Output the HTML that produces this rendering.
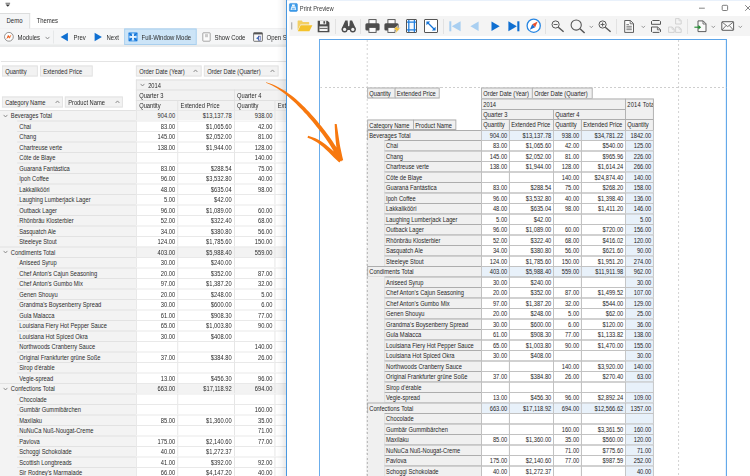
<!DOCTYPE html>
<html><head><meta charset="utf-8"><title>Print Preview</title>
<style>
html,body{margin:0;padding:0}
body{width:750px;height:476px;overflow:hidden;background:#fff;position:relative;font-family:"Liberation Sans",sans-serif;color:#2b2b2b}
.S{position:absolute;top:0;transform-origin:0 0;transform:scale(0.45,0.5);font-size:12.8px}
.S div{position:absolute;white-space:nowrap;overflow:hidden;box-sizing:border-box}
#icons svg{position:absolute;overflow:visible}
#left{position:absolute;left:0;top:0;width:286px;height:476px;overflow:hidden;background:#fff}
#shadow{position:absolute;left:277px;top:0;width:9px;height:476px;background:linear-gradient(to right,rgba(0,0,0,0),rgba(0,0,0,0.03) 50%,rgba(0,0,0,0.09))}
#wb{position:absolute;left:286px;top:0;width:1px;height:476px;background:#4a98e0}
#right{position:absolute;left:287px;top:0;width:463px;height:476px;overflow:hidden;background:#fff;border-top:1px solid #e9f1fb;box-sizing:border-box}
#right .S{left:-287px;top:-1px}
.r{font-size:13.3px;line-height:26px}
.r2{line-height:26px;color:#3a3a3a}
.rb{background:#f5f6f7;border-bottom:2px solid #dcdddd;border-top:1px solid #dcdddd}
.tab{background:#f5f6f7;border-top:2px solid #dcdddd;border-right:2px solid #dcdddd}
.fw{background:#cce4f7;border:2px solid #a9cfee}
.fh{background:#f2f2f2;border:2px solid #e2e2e2;padding-left:5px}
.lh{background:#f2f2f2;border-left:2px solid #e0e0e0;border-top:2px solid #e0e0e0;padding-left:5px}
.lt,.lp,.li{background:#f3f3f3;line-height:19.2px}
.lt,.lp{border-top:2px solid #e2e2e2}
.lp{padding-left:5px}
.ld{background:#fff;border-left:2px solid #e4e4e4;border-top:2px solid #e9e9e9;line-height:19.2px;text-align:right;padding-right:5px}
.lg{background:#f3f3f3}
.page{background:#fff;border:3px solid #64a9ea;border-top:2.8px solid #5ca4e8}
.rh,.rt,.rp,.rd{color:#1e1e1e;border:2px solid #adadad;line-height:19px}
.rh,.rt,.rp,.ri{background:#f0f0f0;padding-left:3px}
.ri{border:none}
.rp{padding-left:1.5px;border-left-color:#dcdcdc}
.rd{text-align:right;padding-right:4px;border-color:#c2c2c2}
.rb2{background:#e8f1fa}
.dv{background:repeating-linear-gradient(to bottom,#cecece 0,#cecece 4.2px,transparent 4.2px,transparent 8.4px)}
.dh{background:repeating-linear-gradient(to right,#cecece 0,#cecece 4.6px,transparent 4.6px,transparent 9.2px)}
.dv2{background:repeating-linear-gradient(to bottom,#a2a2a2 0,#a2a2a2 4.2px,transparent 4.2px,transparent 8.4px)}
</style></head><body>
<div id="left"><div class="S" style="left:0">
<div class="rb" style="left:0px;top:55.4px;width:644.44px;height:36.6px;"></div>
<div class="tab" style="left:0px;top:26px;width:66.67px;height:31px;"></div>
<div class="r" style="left:14.44px;top:29px;width:66.67px;height:26px;">Demo</div>
<div class="r" style="left:81.11px;top:29px;width:66.67px;height:26px;">Themes</div>
<div class="r" style="left:38.89px;top:62.2px;width:66.67px;height:26px;">Modules</div>
<div class="" style="left:117.78px;top:61px;width:1.11px;height:26px;background:#d5d6d7"></div>
<div class="r" style="left:163.33px;top:62.2px;width:66.67px;height:26px;">Prev</div>
<div class="r" style="left:236.67px;top:62.2px;width:66.67px;height:26px;">Next</div>
<div class="fw" style="left:275.56px;top:57px;width:161.11px;height:33px;"></div>
<div class="r" style="left:314.44px;top:62.2px;width:133.33px;height:26px;">Full-Window Mode</div>
<div class="r" style="left:476.67px;top:62.2px;width:88.89px;height:26px;">Show Code</div>
<div class="r" style="left:592.22px;top:62.2px;width:88.89px;height:26px;">Open S</div>
<div class="" style="left:2.22px;top:122px;width:644.44px;height:2px;background:#e4e4e4"></div>
<div class="fh" style="left:4.44px;top:130.6px;width:80px;height:22.8px;line-height:20.8px">Quantity</div>
<div class="fh" style="left:88.89px;top:130.6px;width:116.67px;height:22.8px;line-height:20.8px">Extended Price</div>
<div class="fh" style="left:302.22px;top:130.6px;width:145.56px;height:22.8px;line-height:20.8px">Order Date (Year)</div>
<div class="fh" style="left:453.33px;top:130.6px;width:166px;height:22.8px;line-height:20.8px">Order Date (Quarter)</div>
<div class="fh" style="left:4.44px;top:192.6px;width:135.56px;height:22.8px;line-height:20.8px">Category Name</div>
<div class="fh" style="left:144.44px;top:192.6px;width:128.89px;height:22.8px;line-height:20.8px">Product Name</div>
<div class="lh" style="left:302.22px;top:159px;width:334.44px;height:21px;line-height:20px;padding-left:25px">2014</div>
<div class="lh" style="left:302.22px;top:179px;width:218.67px;height:22px;line-height:21px;">Quarter 3</div>
<div class="lh" style="left:519.78px;top:179px;width:223.33px;height:22px;line-height:21px;">Quarter 4</div>
<div class="lh" style="left:302.22px;top:200px;width:93.11px;height:21px;line-height:20px;">Quantity</div>
<div class="lh" style="left:394.22px;top:200px;width:126.67px;height:21px;line-height:20px;">Extended Price</div>
<div class="lh" style="left:519.78px;top:200px;width:91.56px;height:21px;line-height:20px;">Quantity</div>
<div class="lh" style="left:610.22px;top:200px;width:124.22px;height:21px;line-height:20px;">Extended Price</div>
<div class="li" style="left:0px;top:220px;width:302.22px;height:740px;"></div>
<div class="lt" style="left:0px;top:220px;width:302.22px;height:21px;padding-left:24px">Beverages Total</div>
<div class="ld lg" style="left:302.22px;top:220px;width:92px;height:21px;">904.00</div>
<div class="ld lg" style="left:394.22px;top:220px;width:125.56px;height:21px;">$13,137.78</div>
<div class="ld lg" style="left:519.78px;top:220px;width:90.44px;height:21px;">938.00</div>
<div class="ld lg" style="left:610.22px;top:220px;width:123.11px;height:21px;"></div>
<div class="li" style="left:0px;top:241px;width:37.78px;height:21px;"></div>
<div class="lp" style="left:37.78px;top:241px;width:264.44px;height:21px;">Chai</div>
<div class="ld" style="left:302.22px;top:241px;width:92px;height:21px;">83.00</div>
<div class="ld" style="left:394.22px;top:241px;width:125.56px;height:21px;">$1,065.60</div>
<div class="ld" style="left:519.78px;top:241px;width:90.44px;height:21px;">42.00</div>
<div class="ld" style="left:610.22px;top:241px;width:123.11px;height:21px;"></div>
<div class="li" style="left:0px;top:262px;width:37.78px;height:21px;"></div>
<div class="lp" style="left:37.78px;top:262px;width:264.44px;height:21px;">Chang</div>
<div class="ld" style="left:302.22px;top:262px;width:92px;height:21px;">145.00</div>
<div class="ld" style="left:394.22px;top:262px;width:125.56px;height:21px;">$2,052.00</div>
<div class="ld" style="left:519.78px;top:262px;width:90.44px;height:21px;">81.00</div>
<div class="ld" style="left:610.22px;top:262px;width:123.11px;height:21px;"></div>
<div class="li" style="left:0px;top:283px;width:37.78px;height:21px;"></div>
<div class="lp" style="left:37.78px;top:283px;width:264.44px;height:21px;">Chartreuse verte</div>
<div class="ld" style="left:302.22px;top:283px;width:92px;height:21px;">138.00</div>
<div class="ld" style="left:394.22px;top:283px;width:125.56px;height:21px;">$1,944.00</div>
<div class="ld" style="left:519.78px;top:283px;width:90.44px;height:21px;">128.00</div>
<div class="ld" style="left:610.22px;top:283px;width:123.11px;height:21px;"></div>
<div class="li" style="left:0px;top:304px;width:37.78px;height:21px;"></div>
<div class="lp" style="left:37.78px;top:304px;width:264.44px;height:21px;">Côte de Blaye</div>
<div class="ld" style="left:302.22px;top:304px;width:92px;height:21px;"></div>
<div class="ld" style="left:394.22px;top:304px;width:125.56px;height:21px;"></div>
<div class="ld" style="left:519.78px;top:304px;width:90.44px;height:21px;">140.00</div>
<div class="ld" style="left:610.22px;top:304px;width:123.11px;height:21px;"></div>
<div class="li" style="left:0px;top:325px;width:37.78px;height:21px;"></div>
<div class="lp" style="left:37.78px;top:325px;width:264.44px;height:21px;">Guaraná Fantástica</div>
<div class="ld" style="left:302.22px;top:325px;width:92px;height:21px;">83.00</div>
<div class="ld" style="left:394.22px;top:325px;width:125.56px;height:21px;">$288.54</div>
<div class="ld" style="left:519.78px;top:325px;width:90.44px;height:21px;">75.00</div>
<div class="ld" style="left:610.22px;top:325px;width:123.11px;height:21px;"></div>
<div class="li" style="left:0px;top:346px;width:37.78px;height:21px;"></div>
<div class="lp" style="left:37.78px;top:346px;width:264.44px;height:21px;">Ipoh Coffee</div>
<div class="ld" style="left:302.22px;top:346px;width:92px;height:21px;">96.00</div>
<div class="ld" style="left:394.22px;top:346px;width:125.56px;height:21px;">$3,532.80</div>
<div class="ld" style="left:519.78px;top:346px;width:90.44px;height:21px;">40.00</div>
<div class="ld" style="left:610.22px;top:346px;width:123.11px;height:21px;"></div>
<div class="li" style="left:0px;top:367px;width:37.78px;height:21px;"></div>
<div class="lp" style="left:37.78px;top:367px;width:264.44px;height:21px;">Lakkalikööri</div>
<div class="ld" style="left:302.22px;top:367px;width:92px;height:21px;">48.00</div>
<div class="ld" style="left:394.22px;top:367px;width:125.56px;height:21px;">$635.04</div>
<div class="ld" style="left:519.78px;top:367px;width:90.44px;height:21px;">98.00</div>
<div class="ld" style="left:610.22px;top:367px;width:123.11px;height:21px;"></div>
<div class="li" style="left:0px;top:388px;width:37.78px;height:21px;"></div>
<div class="lp" style="left:37.78px;top:388px;width:264.44px;height:21px;">Laughing Lumberjack Lager</div>
<div class="ld" style="left:302.22px;top:388px;width:92px;height:21px;">5.00</div>
<div class="ld" style="left:394.22px;top:388px;width:125.56px;height:21px;">$42.00</div>
<div class="ld" style="left:519.78px;top:388px;width:90.44px;height:21px;"></div>
<div class="ld" style="left:610.22px;top:388px;width:123.11px;height:21px;"></div>
<div class="li" style="left:0px;top:409px;width:37.78px;height:21px;"></div>
<div class="lp" style="left:37.78px;top:409px;width:264.44px;height:21px;">Outback Lager</div>
<div class="ld" style="left:302.22px;top:409px;width:92px;height:21px;">96.00</div>
<div class="ld" style="left:394.22px;top:409px;width:125.56px;height:21px;">$1,089.00</div>
<div class="ld" style="left:519.78px;top:409px;width:90.44px;height:21px;">60.00</div>
<div class="ld" style="left:610.22px;top:409px;width:123.11px;height:21px;"></div>
<div class="li" style="left:0px;top:430px;width:37.78px;height:21px;"></div>
<div class="lp" style="left:37.78px;top:430px;width:264.44px;height:21px;">Rhönbräu Klosterbier</div>
<div class="ld" style="left:302.22px;top:430px;width:92px;height:21px;">52.00</div>
<div class="ld" style="left:394.22px;top:430px;width:125.56px;height:21px;">$322.40</div>
<div class="ld" style="left:519.78px;top:430px;width:90.44px;height:21px;">68.00</div>
<div class="ld" style="left:610.22px;top:430px;width:123.11px;height:21px;"></div>
<div class="li" style="left:0px;top:451px;width:37.78px;height:21px;"></div>
<div class="lp" style="left:37.78px;top:451px;width:264.44px;height:21px;">Sasquatch Ale</div>
<div class="ld" style="left:302.22px;top:451px;width:92px;height:21px;">34.00</div>
<div class="ld" style="left:394.22px;top:451px;width:125.56px;height:21px;">$380.80</div>
<div class="ld" style="left:519.78px;top:451px;width:90.44px;height:21px;">56.00</div>
<div class="ld" style="left:610.22px;top:451px;width:123.11px;height:21px;"></div>
<div class="li" style="left:0px;top:472px;width:37.78px;height:21px;"></div>
<div class="lp" style="left:37.78px;top:472px;width:264.44px;height:21px;">Steeleye Stout</div>
<div class="ld" style="left:302.22px;top:472px;width:92px;height:21px;">124.00</div>
<div class="ld" style="left:394.22px;top:472px;width:125.56px;height:21px;">$1,785.60</div>
<div class="ld" style="left:519.78px;top:472px;width:90.44px;height:21px;">150.00</div>
<div class="ld" style="left:610.22px;top:472px;width:123.11px;height:21px;"></div>
<div class="lt" style="left:0px;top:493px;width:302.22px;height:21px;padding-left:24px">Condiments Total</div>
<div class="ld lg" style="left:302.22px;top:493px;width:92px;height:21px;">403.00</div>
<div class="ld lg" style="left:394.22px;top:493px;width:125.56px;height:21px;">$5,988.40</div>
<div class="ld lg" style="left:519.78px;top:493px;width:90.44px;height:21px;">559.00</div>
<div class="ld lg" style="left:610.22px;top:493px;width:123.11px;height:21px;"></div>
<div class="li" style="left:0px;top:514px;width:37.78px;height:21px;"></div>
<div class="lp" style="left:37.78px;top:514px;width:264.44px;height:21px;">Aniseed Syrup</div>
<div class="ld" style="left:302.22px;top:514px;width:92px;height:21px;">30.00</div>
<div class="ld" style="left:394.22px;top:514px;width:125.56px;height:21px;">$240.00</div>
<div class="ld" style="left:519.78px;top:514px;width:90.44px;height:21px;"></div>
<div class="ld" style="left:610.22px;top:514px;width:123.11px;height:21px;"></div>
<div class="li" style="left:0px;top:535px;width:37.78px;height:21px;"></div>
<div class="lp" style="left:37.78px;top:535px;width:264.44px;height:21px;">Chef Anton's Cajun Seasoning</div>
<div class="ld" style="left:302.22px;top:535px;width:92px;height:21px;">20.00</div>
<div class="ld" style="left:394.22px;top:535px;width:125.56px;height:21px;">$352.00</div>
<div class="ld" style="left:519.78px;top:535px;width:90.44px;height:21px;">87.00</div>
<div class="ld" style="left:610.22px;top:535px;width:123.11px;height:21px;"></div>
<div class="li" style="left:0px;top:556px;width:37.78px;height:21px;"></div>
<div class="lp" style="left:37.78px;top:556px;width:264.44px;height:21px;">Chef Anton's Gumbo Mix</div>
<div class="ld" style="left:302.22px;top:556px;width:92px;height:21px;">97.00</div>
<div class="ld" style="left:394.22px;top:556px;width:125.56px;height:21px;">$1,387.20</div>
<div class="ld" style="left:519.78px;top:556px;width:90.44px;height:21px;">32.00</div>
<div class="ld" style="left:610.22px;top:556px;width:123.11px;height:21px;"></div>
<div class="li" style="left:0px;top:577px;width:37.78px;height:21px;"></div>
<div class="lp" style="left:37.78px;top:577px;width:264.44px;height:21px;">Genen Shouyu</div>
<div class="ld" style="left:302.22px;top:577px;width:92px;height:21px;">20.00</div>
<div class="ld" style="left:394.22px;top:577px;width:125.56px;height:21px;">$248.00</div>
<div class="ld" style="left:519.78px;top:577px;width:90.44px;height:21px;">5.00</div>
<div class="ld" style="left:610.22px;top:577px;width:123.11px;height:21px;"></div>
<div class="li" style="left:0px;top:598px;width:37.78px;height:21px;"></div>
<div class="lp" style="left:37.78px;top:598px;width:264.44px;height:21px;">Grandma's Boysenberry Spread</div>
<div class="ld" style="left:302.22px;top:598px;width:92px;height:21px;">30.00</div>
<div class="ld" style="left:394.22px;top:598px;width:125.56px;height:21px;">$600.00</div>
<div class="ld" style="left:519.78px;top:598px;width:90.44px;height:21px;">6.00</div>
<div class="ld" style="left:610.22px;top:598px;width:123.11px;height:21px;"></div>
<div class="li" style="left:0px;top:619px;width:37.78px;height:21px;"></div>
<div class="lp" style="left:37.78px;top:619px;width:264.44px;height:21px;">Gula Malacca</div>
<div class="ld" style="left:302.22px;top:619px;width:92px;height:21px;">61.00</div>
<div class="ld" style="left:394.22px;top:619px;width:125.56px;height:21px;">$908.30</div>
<div class="ld" style="left:519.78px;top:619px;width:90.44px;height:21px;">77.00</div>
<div class="ld" style="left:610.22px;top:619px;width:123.11px;height:21px;"></div>
<div class="li" style="left:0px;top:640px;width:37.78px;height:21px;"></div>
<div class="lp" style="left:37.78px;top:640px;width:264.44px;height:21px;">Louisiana Fiery Hot Pepper Sauce</div>
<div class="ld" style="left:302.22px;top:640px;width:92px;height:21px;">65.00</div>
<div class="ld" style="left:394.22px;top:640px;width:125.56px;height:21px;">$1,003.80</div>
<div class="ld" style="left:519.78px;top:640px;width:90.44px;height:21px;">90.00</div>
<div class="ld" style="left:610.22px;top:640px;width:123.11px;height:21px;"></div>
<div class="li" style="left:0px;top:661px;width:37.78px;height:21px;"></div>
<div class="lp" style="left:37.78px;top:661px;width:264.44px;height:21px;">Louisiana Hot Spiced Okra</div>
<div class="ld" style="left:302.22px;top:661px;width:92px;height:21px;">30.00</div>
<div class="ld" style="left:394.22px;top:661px;width:125.56px;height:21px;">$408.00</div>
<div class="ld" style="left:519.78px;top:661px;width:90.44px;height:21px;"></div>
<div class="ld" style="left:610.22px;top:661px;width:123.11px;height:21px;"></div>
<div class="li" style="left:0px;top:682px;width:37.78px;height:21px;"></div>
<div class="lp" style="left:37.78px;top:682px;width:264.44px;height:21px;">Northwoods Cranberry Sauce</div>
<div class="ld" style="left:302.22px;top:682px;width:92px;height:21px;"></div>
<div class="ld" style="left:394.22px;top:682px;width:125.56px;height:21px;"></div>
<div class="ld" style="left:519.78px;top:682px;width:90.44px;height:21px;">140.00</div>
<div class="ld" style="left:610.22px;top:682px;width:123.11px;height:21px;"></div>
<div class="li" style="left:0px;top:703px;width:37.78px;height:21px;"></div>
<div class="lp" style="left:37.78px;top:703px;width:264.44px;height:21px;">Original Frankfurter grüne Soße</div>
<div class="ld" style="left:302.22px;top:703px;width:92px;height:21px;">37.00</div>
<div class="ld" style="left:394.22px;top:703px;width:125.56px;height:21px;">$384.80</div>
<div class="ld" style="left:519.78px;top:703px;width:90.44px;height:21px;">26.00</div>
<div class="ld" style="left:610.22px;top:703px;width:123.11px;height:21px;"></div>
<div class="li" style="left:0px;top:724px;width:37.78px;height:21px;"></div>
<div class="lp" style="left:37.78px;top:724px;width:264.44px;height:21px;">Sirop d'érable</div>
<div class="ld" style="left:302.22px;top:724px;width:92px;height:21px;"></div>
<div class="ld" style="left:394.22px;top:724px;width:125.56px;height:21px;"></div>
<div class="ld" style="left:519.78px;top:724px;width:90.44px;height:21px;"></div>
<div class="ld" style="left:610.22px;top:724px;width:123.11px;height:21px;"></div>
<div class="li" style="left:0px;top:745px;width:37.78px;height:21px;"></div>
<div class="lp" style="left:37.78px;top:745px;width:264.44px;height:21px;">Vegie-spread</div>
<div class="ld" style="left:302.22px;top:745px;width:92px;height:21px;">13.00</div>
<div class="ld" style="left:394.22px;top:745px;width:125.56px;height:21px;">$456.30</div>
<div class="ld" style="left:519.78px;top:745px;width:90.44px;height:21px;">96.00</div>
<div class="ld" style="left:610.22px;top:745px;width:123.11px;height:21px;"></div>
<div class="lt" style="left:0px;top:766px;width:302.22px;height:21px;padding-left:24px">Confections Total</div>
<div class="ld lg" style="left:302.22px;top:766px;width:92px;height:21px;">663.00</div>
<div class="ld lg" style="left:394.22px;top:766px;width:125.56px;height:21px;">$17,118.92</div>
<div class="ld lg" style="left:519.78px;top:766px;width:90.44px;height:21px;">694.00</div>
<div class="ld lg" style="left:610.22px;top:766px;width:123.11px;height:21px;"></div>
<div class="li" style="left:0px;top:787px;width:37.78px;height:21px;"></div>
<div class="lp" style="left:37.78px;top:787px;width:264.44px;height:21px;">Chocolade</div>
<div class="ld" style="left:302.22px;top:787px;width:92px;height:21px;"></div>
<div class="ld" style="left:394.22px;top:787px;width:125.56px;height:21px;"></div>
<div class="ld" style="left:519.78px;top:787px;width:90.44px;height:21px;"></div>
<div class="ld" style="left:610.22px;top:787px;width:123.11px;height:21px;"></div>
<div class="li" style="left:0px;top:808px;width:37.78px;height:21px;"></div>
<div class="lp" style="left:37.78px;top:808px;width:264.44px;height:21px;">Gumbär Gummibärchen</div>
<div class="ld" style="left:302.22px;top:808px;width:92px;height:21px;"></div>
<div class="ld" style="left:394.22px;top:808px;width:125.56px;height:21px;"></div>
<div class="ld" style="left:519.78px;top:808px;width:90.44px;height:21px;">160.00</div>
<div class="ld" style="left:610.22px;top:808px;width:123.11px;height:21px;"></div>
<div class="li" style="left:0px;top:829px;width:37.78px;height:21px;"></div>
<div class="lp" style="left:37.78px;top:829px;width:264.44px;height:21px;">Maxilaku</div>
<div class="ld" style="left:302.22px;top:829px;width:92px;height:21px;">85.00</div>
<div class="ld" style="left:394.22px;top:829px;width:125.56px;height:21px;">$1,360.00</div>
<div class="ld" style="left:519.78px;top:829px;width:90.44px;height:21px;">35.00</div>
<div class="ld" style="left:610.22px;top:829px;width:123.11px;height:21px;"></div>
<div class="li" style="left:0px;top:850px;width:37.78px;height:21px;"></div>
<div class="lp" style="left:37.78px;top:850px;width:264.44px;height:21px;">NuNuCa Nuß-Nougat-Creme</div>
<div class="ld" style="left:302.22px;top:850px;width:92px;height:21px;"></div>
<div class="ld" style="left:394.22px;top:850px;width:125.56px;height:21px;"></div>
<div class="ld" style="left:519.78px;top:850px;width:90.44px;height:21px;">71.00</div>
<div class="ld" style="left:610.22px;top:850px;width:123.11px;height:21px;"></div>
<div class="li" style="left:0px;top:871px;width:37.78px;height:21px;"></div>
<div class="lp" style="left:37.78px;top:871px;width:264.44px;height:21px;">Pavlova</div>
<div class="ld" style="left:302.22px;top:871px;width:92px;height:21px;">175.00</div>
<div class="ld" style="left:394.22px;top:871px;width:125.56px;height:21px;">$2,140.60</div>
<div class="ld" style="left:519.78px;top:871px;width:90.44px;height:21px;">77.00</div>
<div class="ld" style="left:610.22px;top:871px;width:123.11px;height:21px;"></div>
<div class="li" style="left:0px;top:892px;width:37.78px;height:21px;"></div>
<div class="lp" style="left:37.78px;top:892px;width:264.44px;height:21px;">Schoggi Schokolade</div>
<div class="ld" style="left:302.22px;top:892px;width:92px;height:21px;">40.00</div>
<div class="ld" style="left:394.22px;top:892px;width:125.56px;height:21px;">$1,272.37</div>
<div class="ld" style="left:519.78px;top:892px;width:90.44px;height:21px;"></div>
<div class="ld" style="left:610.22px;top:892px;width:123.11px;height:21px;"></div>
<div class="li" style="left:0px;top:913px;width:37.78px;height:21px;"></div>
<div class="lp" style="left:37.78px;top:913px;width:264.44px;height:21px;">Scottish Longbreads</div>
<div class="ld" style="left:302.22px;top:913px;width:92px;height:21px;">41.00</div>
<div class="ld" style="left:394.22px;top:913px;width:125.56px;height:21px;">$392.00</div>
<div class="ld" style="left:519.78px;top:913px;width:90.44px;height:21px;">92.00</div>
<div class="ld" style="left:610.22px;top:913px;width:123.11px;height:21px;"></div>
<div class="li" style="left:0px;top:934px;width:37.78px;height:21px;"></div>
<div class="lp" style="left:37.78px;top:934px;width:264.44px;height:21px;">Sir Rodney's Marmalade</div>
<div class="ld" style="left:302.22px;top:934px;width:92px;height:21px;">66.00</div>
<div class="ld" style="left:394.22px;top:934px;width:125.56px;height:21px;">$4,147.20</div>
<div class="ld" style="left:519.78px;top:934px;width:90.44px;height:21px;">40.00</div>
<div class="ld" style="left:610.22px;top:934px;width:123.11px;height:21px;"></div>
</div></div>
<div id="shadow"></div>
<div id="wb"></div>
<div id="right"><div class="S">
<div class="r2" style="left:666.22px;top:4.2px;width:133.33px;height:26px;">Print Preview</div>
<div class="" style="left:642.89px;top:32.4px;width:1044.44px;height:39.2px;background:#f4f4f4"></div>
<div class="page" style="left:708.22px;top:78px;width:907.78px;height:900px;"></div>
<div class="dv" style="left:814.67px;top:80px;width:2px;height:880px;"></div>
<div class="dv" style="left:1507.33px;top:80px;width:2px;height:880px;"></div>
<div class="dh" style="left:712.22px;top:173.6px;width:902.22px;height:2px;"></div>
<div class="rh" style="left:815.56px;top:174.6px;width:63.33px;height:22.4px;line-height:20.4px;">Quantity</div>
<div class="rh" style="left:876.67px;top:174.6px;width:100px;height:22.4px;line-height:20.4px;">Extended Price</div>
<div class="rh" style="left:815.56px;top:239.2px;width:104.44px;height:21px;line-height:19px;">Category Name</div>
<div class="rh" style="left:917.78px;top:239.2px;width:96.67px;height:21px;line-height:19px;">Product Name</div>
<div class="rh" style="left:1068.89px;top:174.6px;width:115.56px;height:23.4px;line-height:21.4px;">Order Date (Year)</div>
<div class="rh" style="left:1182.22px;top:174.6px;width:134.44px;height:23.4px;line-height:21.4px;">Order Date (Quarter)</div>
<div class="rh" style="left:1068.89px;top:197px;width:322.22px;height:23px;line-height:21px;">2014</div>
<div class="rh" style="left:1388.89px;top:197px;width:64.44px;height:43px;line-height:41px;line-height:21px;letter-spacing:0.5px">2014 Total</div>
<div class="rh" style="left:1068.89px;top:218px;width:162.22px;height:22px;line-height:20px;">Quarter 3</div>
<div class="rh" style="left:1228.89px;top:218px;width:162.22px;height:22px;line-height:20px;">Quarter 4</div>
<div class="rh" style="left:1068.89px;top:238px;width:64.44px;height:24.2px;line-height:22.2px;line-height:19px">Quantity</div>
<div class="rh" style="left:1131.11px;top:238px;width:100px;height:24.2px;line-height:22.2px;line-height:19px">Extended Price</div>
<div class="rh" style="left:1228.89px;top:238px;width:64.44px;height:24.2px;line-height:22.2px;line-height:19px">Quantity</div>
<div class="rh" style="left:1291.11px;top:238px;width:100px;height:24.2px;line-height:22.2px;line-height:19px">Extended Price</div>
<div class="rh" style="left:1388.89px;top:238px;width:64.44px;height:24.2px;line-height:22.2px;line-height:19px">Quantity</div>
<div class="ri" style="left:816.22px;top:262px;width:253.33px;height:700px;"></div>
<div class="rt" style="left:815.56px;top:260.2px;width:255.56px;height:21.8px;">Beverages Total</div>
<div class="rd rb2" style="left:1068.89px;top:260.2px;width:64.44px;height:21.8px;">904.00</div>
<div class="rd rb2" style="left:1131.11px;top:260.2px;width:100px;height:21.8px;">$13,137.78</div>
<div class="rd rb2" style="left:1228.89px;top:260.2px;width:64.44px;height:21.8px;">938.00</div>
<div class="rd rb2" style="left:1291.11px;top:260.2px;width:100px;height:21.8px;">$34,781.22</div>
<div class="rd rb2" style="left:1388.89px;top:260.2px;width:64.44px;height:21.8px;">1842.00</div>
<div class="ri" style="left:815.56px;top:280px;width:41.11px;height:23px;"></div>
<div class="rp" style="left:854.44px;top:280px;width:216.67px;height:23px;">Chai</div>
<div class="rd" style="left:1068.89px;top:280px;width:64.44px;height:23px;">83.00</div>
<div class="rd" style="left:1131.11px;top:280px;width:100px;height:23px;">$1,065.60</div>
<div class="rd" style="left:1228.89px;top:280px;width:64.44px;height:23px;">42.00</div>
<div class="rd" style="left:1291.11px;top:280px;width:100px;height:23px;">$540.00</div>
<div class="rd rb2" style="left:1388.89px;top:280px;width:64.44px;height:23px;">125.00</div>
<div class="ri" style="left:815.56px;top:301px;width:41.11px;height:23px;"></div>
<div class="rp" style="left:854.44px;top:301px;width:216.67px;height:23px;">Chang</div>
<div class="rd" style="left:1068.89px;top:301px;width:64.44px;height:23px;">145.00</div>
<div class="rd" style="left:1131.11px;top:301px;width:100px;height:23px;">$2,052.00</div>
<div class="rd" style="left:1228.89px;top:301px;width:64.44px;height:23px;">81.00</div>
<div class="rd" style="left:1291.11px;top:301px;width:100px;height:23px;">$965.96</div>
<div class="rd rb2" style="left:1388.89px;top:301px;width:64.44px;height:23px;">226.00</div>
<div class="ri" style="left:815.56px;top:322px;width:41.11px;height:23px;"></div>
<div class="rp" style="left:854.44px;top:322px;width:216.67px;height:23px;">Chartreuse verte</div>
<div class="rd" style="left:1068.89px;top:322px;width:64.44px;height:23px;">138.00</div>
<div class="rd" style="left:1131.11px;top:322px;width:100px;height:23px;">$1,944.00</div>
<div class="rd" style="left:1228.89px;top:322px;width:64.44px;height:23px;">128.00</div>
<div class="rd" style="left:1291.11px;top:322px;width:100px;height:23px;">$1,614.24</div>
<div class="rd rb2" style="left:1388.89px;top:322px;width:64.44px;height:23px;">266.00</div>
<div class="ri" style="left:815.56px;top:343px;width:41.11px;height:23px;"></div>
<div class="rp" style="left:854.44px;top:343px;width:216.67px;height:23px;">Côte de Blaye</div>
<div class="rd" style="left:1068.89px;top:343px;width:64.44px;height:23px;"></div>
<div class="rd" style="left:1131.11px;top:343px;width:100px;height:23px;"></div>
<div class="rd" style="left:1228.89px;top:343px;width:64.44px;height:23px;">140.00</div>
<div class="rd" style="left:1291.11px;top:343px;width:100px;height:23px;">$24,874.40</div>
<div class="rd rb2" style="left:1388.89px;top:343px;width:64.44px;height:23px;">140.00</div>
<div class="ri" style="left:815.56px;top:364px;width:41.11px;height:23px;"></div>
<div class="rp" style="left:854.44px;top:364px;width:216.67px;height:23px;">Guaraná Fantástica</div>
<div class="rd" style="left:1068.89px;top:364px;width:64.44px;height:23px;">83.00</div>
<div class="rd" style="left:1131.11px;top:364px;width:100px;height:23px;">$288.54</div>
<div class="rd" style="left:1228.89px;top:364px;width:64.44px;height:23px;">75.00</div>
<div class="rd" style="left:1291.11px;top:364px;width:100px;height:23px;">$268.20</div>
<div class="rd rb2" style="left:1388.89px;top:364px;width:64.44px;height:23px;">158.00</div>
<div class="ri" style="left:815.56px;top:385px;width:41.11px;height:23px;"></div>
<div class="rp" style="left:854.44px;top:385px;width:216.67px;height:23px;">Ipoh Coffee</div>
<div class="rd" style="left:1068.89px;top:385px;width:64.44px;height:23px;">96.00</div>
<div class="rd" style="left:1131.11px;top:385px;width:100px;height:23px;">$3,532.80</div>
<div class="rd" style="left:1228.89px;top:385px;width:64.44px;height:23px;">40.00</div>
<div class="rd" style="left:1291.11px;top:385px;width:100px;height:23px;">$1,398.40</div>
<div class="rd rb2" style="left:1388.89px;top:385px;width:64.44px;height:23px;">136.00</div>
<div class="ri" style="left:815.56px;top:406px;width:41.11px;height:23px;"></div>
<div class="rp" style="left:854.44px;top:406px;width:216.67px;height:23px;">Lakkalikööri</div>
<div class="rd" style="left:1068.89px;top:406px;width:64.44px;height:23px;">48.00</div>
<div class="rd" style="left:1131.11px;top:406px;width:100px;height:23px;">$635.04</div>
<div class="rd" style="left:1228.89px;top:406px;width:64.44px;height:23px;">98.00</div>
<div class="rd" style="left:1291.11px;top:406px;width:100px;height:23px;">$1,411.20</div>
<div class="rd rb2" style="left:1388.89px;top:406px;width:64.44px;height:23px;">146.00</div>
<div class="ri" style="left:815.56px;top:427px;width:41.11px;height:23px;"></div>
<div class="rp" style="left:854.44px;top:427px;width:216.67px;height:23px;">Laughing Lumberjack Lager</div>
<div class="rd" style="left:1068.89px;top:427px;width:64.44px;height:23px;">5.00</div>
<div class="rd" style="left:1131.11px;top:427px;width:100px;height:23px;">$42.00</div>
<div class="rd" style="left:1228.89px;top:427px;width:64.44px;height:23px;"></div>
<div class="rd" style="left:1291.11px;top:427px;width:100px;height:23px;"></div>
<div class="rd rb2" style="left:1388.89px;top:427px;width:64.44px;height:23px;">5.00</div>
<div class="ri" style="left:815.56px;top:448px;width:41.11px;height:23px;"></div>
<div class="rp" style="left:854.44px;top:448px;width:216.67px;height:23px;">Outback Lager</div>
<div class="rd" style="left:1068.89px;top:448px;width:64.44px;height:23px;">96.00</div>
<div class="rd" style="left:1131.11px;top:448px;width:100px;height:23px;">$1,089.00</div>
<div class="rd" style="left:1228.89px;top:448px;width:64.44px;height:23px;">60.00</div>
<div class="rd" style="left:1291.11px;top:448px;width:100px;height:23px;">$720.00</div>
<div class="rd rb2" style="left:1388.89px;top:448px;width:64.44px;height:23px;">156.00</div>
<div class="ri" style="left:815.56px;top:469px;width:41.11px;height:23px;"></div>
<div class="rp" style="left:854.44px;top:469px;width:216.67px;height:23px;">Rhönbräu Klosterbier</div>
<div class="rd" style="left:1068.89px;top:469px;width:64.44px;height:23px;">52.00</div>
<div class="rd" style="left:1131.11px;top:469px;width:100px;height:23px;">$322.40</div>
<div class="rd" style="left:1228.89px;top:469px;width:64.44px;height:23px;">68.00</div>
<div class="rd" style="left:1291.11px;top:469px;width:100px;height:23px;">$416.02</div>
<div class="rd rb2" style="left:1388.89px;top:469px;width:64.44px;height:23px;">120.00</div>
<div class="ri" style="left:815.56px;top:490px;width:41.11px;height:23px;"></div>
<div class="rp" style="left:854.44px;top:490px;width:216.67px;height:23px;">Sasquatch Ale</div>
<div class="rd" style="left:1068.89px;top:490px;width:64.44px;height:23px;">34.00</div>
<div class="rd" style="left:1131.11px;top:490px;width:100px;height:23px;">$380.80</div>
<div class="rd" style="left:1228.89px;top:490px;width:64.44px;height:23px;">56.00</div>
<div class="rd" style="left:1291.11px;top:490px;width:100px;height:23px;">$621.60</div>
<div class="rd rb2" style="left:1388.89px;top:490px;width:64.44px;height:23px;">90.00</div>
<div class="ri" style="left:815.56px;top:511px;width:41.11px;height:23px;"></div>
<div class="rp" style="left:854.44px;top:511px;width:216.67px;height:23px;">Steeleye Stout</div>
<div class="rd" style="left:1068.89px;top:511px;width:64.44px;height:23px;">124.00</div>
<div class="rd" style="left:1131.11px;top:511px;width:100px;height:23px;">$1,785.60</div>
<div class="rd" style="left:1228.89px;top:511px;width:64.44px;height:23px;">150.00</div>
<div class="rd" style="left:1291.11px;top:511px;width:100px;height:23px;">$1,951.20</div>
<div class="rd rb2" style="left:1388.89px;top:511px;width:64.44px;height:23px;">274.00</div>
<div class="rt" style="left:815.56px;top:532px;width:255.56px;height:23px;">Condiments Total</div>
<div class="rd rb2" style="left:1068.89px;top:532px;width:64.44px;height:23px;">403.00</div>
<div class="rd rb2" style="left:1131.11px;top:532px;width:100px;height:23px;">$5,988.40</div>
<div class="rd rb2" style="left:1228.89px;top:532px;width:64.44px;height:23px;">559.00</div>
<div class="rd rb2" style="left:1291.11px;top:532px;width:100px;height:23px;">$11,911.98</div>
<div class="rd rb2" style="left:1388.89px;top:532px;width:64.44px;height:23px;">962.00</div>
<div class="ri" style="left:815.56px;top:553px;width:41.11px;height:23px;"></div>
<div class="rp" style="left:854.44px;top:553px;width:216.67px;height:23px;">Aniseed Syrup</div>
<div class="rd" style="left:1068.89px;top:553px;width:64.44px;height:23px;">30.00</div>
<div class="rd" style="left:1131.11px;top:553px;width:100px;height:23px;">$240.00</div>
<div class="rd" style="left:1228.89px;top:553px;width:64.44px;height:23px;"></div>
<div class="rd" style="left:1291.11px;top:553px;width:100px;height:23px;"></div>
<div class="rd rb2" style="left:1388.89px;top:553px;width:64.44px;height:23px;">30.00</div>
<div class="ri" style="left:815.56px;top:574px;width:41.11px;height:23px;"></div>
<div class="rp" style="left:854.44px;top:574px;width:216.67px;height:23px;">Chef Anton's Cajun Seasoning</div>
<div class="rd" style="left:1068.89px;top:574px;width:64.44px;height:23px;">20.00</div>
<div class="rd" style="left:1131.11px;top:574px;width:100px;height:23px;">$352.00</div>
<div class="rd" style="left:1228.89px;top:574px;width:64.44px;height:23px;">87.00</div>
<div class="rd" style="left:1291.11px;top:574px;width:100px;height:23px;">$1,499.52</div>
<div class="rd rb2" style="left:1388.89px;top:574px;width:64.44px;height:23px;">107.00</div>
<div class="ri" style="left:815.56px;top:595px;width:41.11px;height:23px;"></div>
<div class="rp" style="left:854.44px;top:595px;width:216.67px;height:23px;">Chef Anton's Gumbo Mix</div>
<div class="rd" style="left:1068.89px;top:595px;width:64.44px;height:23px;">97.00</div>
<div class="rd" style="left:1131.11px;top:595px;width:100px;height:23px;">$1,387.20</div>
<div class="rd" style="left:1228.89px;top:595px;width:64.44px;height:23px;">32.00</div>
<div class="rd" style="left:1291.11px;top:595px;width:100px;height:23px;">$544.00</div>
<div class="rd rb2" style="left:1388.89px;top:595px;width:64.44px;height:23px;">129.00</div>
<div class="ri" style="left:815.56px;top:616px;width:41.11px;height:23px;"></div>
<div class="rp" style="left:854.44px;top:616px;width:216.67px;height:23px;">Genen Shouyu</div>
<div class="rd" style="left:1068.89px;top:616px;width:64.44px;height:23px;">20.00</div>
<div class="rd" style="left:1131.11px;top:616px;width:100px;height:23px;">$248.00</div>
<div class="rd" style="left:1228.89px;top:616px;width:64.44px;height:23px;">5.00</div>
<div class="rd" style="left:1291.11px;top:616px;width:100px;height:23px;">$62.00</div>
<div class="rd rb2" style="left:1388.89px;top:616px;width:64.44px;height:23px;">25.00</div>
<div class="ri" style="left:815.56px;top:637px;width:41.11px;height:23px;"></div>
<div class="rp" style="left:854.44px;top:637px;width:216.67px;height:23px;">Grandma's Boysenberry Spread</div>
<div class="rd" style="left:1068.89px;top:637px;width:64.44px;height:23px;">30.00</div>
<div class="rd" style="left:1131.11px;top:637px;width:100px;height:23px;">$600.00</div>
<div class="rd" style="left:1228.89px;top:637px;width:64.44px;height:23px;">6.00</div>
<div class="rd" style="left:1291.11px;top:637px;width:100px;height:23px;">$120.00</div>
<div class="rd rb2" style="left:1388.89px;top:637px;width:64.44px;height:23px;">36.00</div>
<div class="ri" style="left:815.56px;top:658px;width:41.11px;height:23px;"></div>
<div class="rp" style="left:854.44px;top:658px;width:216.67px;height:23px;">Gula Malacca</div>
<div class="rd" style="left:1068.89px;top:658px;width:64.44px;height:23px;">61.00</div>
<div class="rd" style="left:1131.11px;top:658px;width:100px;height:23px;">$908.30</div>
<div class="rd" style="left:1228.89px;top:658px;width:64.44px;height:23px;">77.00</div>
<div class="rd" style="left:1291.11px;top:658px;width:100px;height:23px;">$1,133.82</div>
<div class="rd rb2" style="left:1388.89px;top:658px;width:64.44px;height:23px;">138.00</div>
<div class="ri" style="left:815.56px;top:679px;width:41.11px;height:23px;"></div>
<div class="rp" style="left:854.44px;top:679px;width:216.67px;height:23px;">Louisiana Fiery Hot Pepper Sauce</div>
<div class="rd" style="left:1068.89px;top:679px;width:64.44px;height:23px;">65.00</div>
<div class="rd" style="left:1131.11px;top:679px;width:100px;height:23px;">$1,003.80</div>
<div class="rd" style="left:1228.89px;top:679px;width:64.44px;height:23px;">90.00</div>
<div class="rd" style="left:1291.11px;top:679px;width:100px;height:23px;">$1,470.00</div>
<div class="rd rb2" style="left:1388.89px;top:679px;width:64.44px;height:23px;">155.00</div>
<div class="ri" style="left:815.56px;top:700px;width:41.11px;height:23px;"></div>
<div class="rp" style="left:854.44px;top:700px;width:216.67px;height:23px;">Louisiana Hot Spiced Okra</div>
<div class="rd" style="left:1068.89px;top:700px;width:64.44px;height:23px;">30.00</div>
<div class="rd" style="left:1131.11px;top:700px;width:100px;height:23px;">$408.00</div>
<div class="rd" style="left:1228.89px;top:700px;width:64.44px;height:23px;"></div>
<div class="rd" style="left:1291.11px;top:700px;width:100px;height:23px;"></div>
<div class="rd rb2" style="left:1388.89px;top:700px;width:64.44px;height:23px;">30.00</div>
<div class="ri" style="left:815.56px;top:721px;width:41.11px;height:23px;"></div>
<div class="rp" style="left:854.44px;top:721px;width:216.67px;height:23px;">Northwoods Cranberry Sauce</div>
<div class="rd" style="left:1068.89px;top:721px;width:64.44px;height:23px;"></div>
<div class="rd" style="left:1131.11px;top:721px;width:100px;height:23px;"></div>
<div class="rd" style="left:1228.89px;top:721px;width:64.44px;height:23px;">140.00</div>
<div class="rd" style="left:1291.11px;top:721px;width:100px;height:23px;">$3,920.00</div>
<div class="rd rb2" style="left:1388.89px;top:721px;width:64.44px;height:23px;">140.00</div>
<div class="ri" style="left:815.56px;top:742px;width:41.11px;height:23px;"></div>
<div class="rp" style="left:854.44px;top:742px;width:216.67px;height:23px;">Original Frankfurter grüne Soße</div>
<div class="rd" style="left:1068.89px;top:742px;width:64.44px;height:23px;">37.00</div>
<div class="rd" style="left:1131.11px;top:742px;width:100px;height:23px;">$384.80</div>
<div class="rd" style="left:1228.89px;top:742px;width:64.44px;height:23px;">26.00</div>
<div class="rd" style="left:1291.11px;top:742px;width:100px;height:23px;">$270.40</div>
<div class="rd rb2" style="left:1388.89px;top:742px;width:64.44px;height:23px;">63.00</div>
<div class="ri" style="left:815.56px;top:763px;width:41.11px;height:23px;"></div>
<div class="rp" style="left:854.44px;top:763px;width:216.67px;height:23px;">Sirop d'érable</div>
<div class="rd" style="left:1068.89px;top:763px;width:64.44px;height:23px;"></div>
<div class="rd" style="left:1131.11px;top:763px;width:100px;height:23px;"></div>
<div class="rd" style="left:1228.89px;top:763px;width:64.44px;height:23px;"></div>
<div class="rd" style="left:1291.11px;top:763px;width:100px;height:23px;"></div>
<div class="rd rb2" style="left:1388.89px;top:763px;width:64.44px;height:23px;"></div>
<div class="ri" style="left:815.56px;top:784px;width:41.11px;height:23px;"></div>
<div class="rp" style="left:854.44px;top:784px;width:216.67px;height:23px;">Vegie-spread</div>
<div class="rd" style="left:1068.89px;top:784px;width:64.44px;height:23px;">13.00</div>
<div class="rd" style="left:1131.11px;top:784px;width:100px;height:23px;">$456.30</div>
<div class="rd" style="left:1228.89px;top:784px;width:64.44px;height:23px;">96.00</div>
<div class="rd" style="left:1291.11px;top:784px;width:100px;height:23px;">$2,892.24</div>
<div class="rd rb2" style="left:1388.89px;top:784px;width:64.44px;height:23px;">109.00</div>
<div class="rt" style="left:815.56px;top:805px;width:255.56px;height:23px;">Confections Total</div>
<div class="rd rb2" style="left:1068.89px;top:805px;width:64.44px;height:23px;">663.00</div>
<div class="rd rb2" style="left:1131.11px;top:805px;width:100px;height:23px;">$17,118.92</div>
<div class="rd rb2" style="left:1228.89px;top:805px;width:64.44px;height:23px;">694.00</div>
<div class="rd rb2" style="left:1291.11px;top:805px;width:100px;height:23px;">$12,566.62</div>
<div class="rd rb2" style="left:1388.89px;top:805px;width:64.44px;height:23px;">1357.00</div>
<div class="ri" style="left:815.56px;top:826px;width:41.11px;height:23px;"></div>
<div class="rp" style="left:854.44px;top:826px;width:216.67px;height:23px;">Chocolade</div>
<div class="rd" style="left:1068.89px;top:826px;width:64.44px;height:23px;"></div>
<div class="rd" style="left:1131.11px;top:826px;width:100px;height:23px;"></div>
<div class="rd" style="left:1228.89px;top:826px;width:64.44px;height:23px;"></div>
<div class="rd" style="left:1291.11px;top:826px;width:100px;height:23px;"></div>
<div class="rd rb2" style="left:1388.89px;top:826px;width:64.44px;height:23px;"></div>
<div class="ri" style="left:815.56px;top:847px;width:41.11px;height:23px;"></div>
<div class="rp" style="left:854.44px;top:847px;width:216.67px;height:23px;">Gumbär Gummibärchen</div>
<div class="rd" style="left:1068.89px;top:847px;width:64.44px;height:23px;"></div>
<div class="rd" style="left:1131.11px;top:847px;width:100px;height:23px;"></div>
<div class="rd" style="left:1228.89px;top:847px;width:64.44px;height:23px;">160.00</div>
<div class="rd" style="left:1291.11px;top:847px;width:100px;height:23px;">$3,361.50</div>
<div class="rd rb2" style="left:1388.89px;top:847px;width:64.44px;height:23px;">160.00</div>
<div class="ri" style="left:815.56px;top:868px;width:41.11px;height:23px;"></div>
<div class="rp" style="left:854.44px;top:868px;width:216.67px;height:23px;">Maxilaku</div>
<div class="rd" style="left:1068.89px;top:868px;width:64.44px;height:23px;">85.00</div>
<div class="rd" style="left:1131.11px;top:868px;width:100px;height:23px;">$1,360.00</div>
<div class="rd" style="left:1228.89px;top:868px;width:64.44px;height:23px;">35.00</div>
<div class="rd" style="left:1291.11px;top:868px;width:100px;height:23px;">$560.00</div>
<div class="rd rb2" style="left:1388.89px;top:868px;width:64.44px;height:23px;">120.00</div>
<div class="ri" style="left:815.56px;top:889px;width:41.11px;height:23px;"></div>
<div class="rp" style="left:854.44px;top:889px;width:216.67px;height:23px;">NuNuCa Nuß-Nougat-Creme</div>
<div class="rd" style="left:1068.89px;top:889px;width:64.44px;height:23px;"></div>
<div class="rd" style="left:1131.11px;top:889px;width:100px;height:23px;"></div>
<div class="rd" style="left:1228.89px;top:889px;width:64.44px;height:23px;">71.00</div>
<div class="rd" style="left:1291.11px;top:889px;width:100px;height:23px;">$775.60</div>
<div class="rd rb2" style="left:1388.89px;top:889px;width:64.44px;height:23px;">71.00</div>
<div class="ri" style="left:815.56px;top:910px;width:41.11px;height:23px;"></div>
<div class="rp" style="left:854.44px;top:910px;width:216.67px;height:23px;">Pavlova</div>
<div class="rd" style="left:1068.89px;top:910px;width:64.44px;height:23px;">175.00</div>
<div class="rd" style="left:1131.11px;top:910px;width:100px;height:23px;">$2,140.60</div>
<div class="rd" style="left:1228.89px;top:910px;width:64.44px;height:23px;">77.00</div>
<div class="rd" style="left:1291.11px;top:910px;width:100px;height:23px;">$987.59</div>
<div class="rd rb2" style="left:1388.89px;top:910px;width:64.44px;height:23px;">252.00</div>
<div class="ri" style="left:815.56px;top:931px;width:41.11px;height:23px;"></div>
<div class="rp" style="left:854.44px;top:931px;width:216.67px;height:23px;">Schoggi Schokolade</div>
<div class="rd" style="left:1068.89px;top:931px;width:64.44px;height:23px;">40.00</div>
<div class="rd" style="left:1131.11px;top:931px;width:100px;height:23px;">$1,272.37</div>
<div class="rd" style="left:1228.89px;top:931px;width:64.44px;height:23px;"></div>
<div class="rd" style="left:1291.11px;top:931px;width:100px;height:23px;"></div>
<div class="rd rb2" style="left:1388.89px;top:931px;width:64.44px;height:23px;">40.00</div>
<div class="dv dv2" style="left:814.89px;top:260px;width:2px;height:700px;"></div>
</div></div>
<div id="icons">
<svg style="left:5px;top:2px" width="6" height="6" viewBox="0 0 6 6"><rect x="0.5" y="0.8" width="4.6" height="0.8" fill="#444"/><path d="M0.6 2.4 L5 2.4 L2.8 4.8 Z" fill="#333"/></svg>
<svg style="left:44.5px;top:35.5px" width="5" height="4" viewBox="0 0 5 4"><path d="M0.6 0.9 L2.5 3 L4.4 0.9" fill="none" stroke="#666" stroke-width="0.7"/></svg>
<svg style="left:3.5px;top:32px" width="10" height="10" viewBox="0 0 10 10"><circle cx="4.9" cy="4.8" r="4.4" fill="#fdfdfd" stroke="#7a7a7a" stroke-width="0.8"/><path d="M2.3 7.2 L4 3 L5.6 4.2 Z" fill="#e8541a"/><path d="M7.5 2.4 L5.8 6.6 L4.2 5.4 Z" fill="#f0702a"/></svg>
<svg style="left:60px;top:32px" width="9" height="10" viewBox="0 0 9 10"><path d="M0.6 5 L7.9 0.7 L7.9 9.3 Z" fill="#0f6fd1"/></svg>
<svg style="left:94px;top:32px" width="9" height="10" viewBox="0 0 9 10"><path d="M7.9 5 L0.6 0.7 L0.6 9.3 Z" fill="#0f6fd1"/></svg>
<svg style="left:128px;top:32px" width="10" height="10" viewBox="0 0 10 10"><rect x="0.3" y="0.2" width="9.4" height="9.4" rx="1.1" fill="#4a9bea"/><path d="M5 0.4 L6.4 3.5 L9.6 4.9 L6.4 6.3 L5 9.4 L3.6 6.3 L0.4 4.9 L3.6 3.5 Z" fill="#e6f2fd"/><path d="M1.7 1.6 L3.5 3.4 M8.3 1.6 L6.5 3.4 M1.7 8.2 L3.5 6.4 M8.3 8.2 L6.5 6.4" stroke="#0f6fd1" stroke-width="1.3" stroke-linecap="round"/></svg>
<svg style="left:201.5px;top:32px" width="9" height="10" viewBox="0 0 9 10"><rect x="0.8" y="0.8" width="7.4" height="8.4" rx="0.6" fill="#fbfbfb" stroke="#8a8a8a" stroke-width="0.75"/><path d="M3 2.7 H6 M3 3.7 H6 M3 4.7 H6" stroke="#a5a5a5" stroke-width="0.6"/></svg>
<svg style="left:253px;top:32px" width="10" height="10" viewBox="0 0 10 10"><rect x="0.6" y="0.7" width="8.8" height="8.6" rx="0.6" fill="#fafafa" stroke="#555" stroke-width="0.8"/><rect x="0.6" y="0.7" width="8.8" height="1.7" fill="#555"/><path d="M3 6.2 L5.6 4.6 L5.6 7.8 Z" fill="#3a6fc0"/><rect x="5.6" y="4.2" width="1.6" height="4" fill="none" stroke="#3a4fa0" stroke-width="0.7"/></svg>
<svg style="left:193px;top:69px" width="5" height="4" viewBox="0 0 5 4"><path d="M0.6 3 L2.5 0.9 L4.4 3" fill="none" stroke="#666" stroke-width="0.7"/></svg>
<svg style="left:270.2px;top:69px" width="5" height="4" viewBox="0 0 5 4"><path d="M0.6 3 L2.5 0.9 L4.4 3" fill="none" stroke="#666" stroke-width="0.7"/></svg>
<svg style="left:54.5px;top:100px" width="5" height="4" viewBox="0 0 5 4"><path d="M0.6 3 L2.5 0.9 L4.4 3" fill="none" stroke="#666" stroke-width="0.7"/></svg>
<svg style="left:114.5px;top:100px" width="5" height="4" viewBox="0 0 5 4"><path d="M0.6 3 L2.5 0.9 L4.4 3" fill="none" stroke="#666" stroke-width="0.7"/></svg>
<svg style="left:139.5px;top:83px" width="5" height="4" viewBox="0 0 5 4"><path d="M0.6 0.9 L2.5 3 L4.4 0.9" fill="none" stroke="#666" stroke-width="0.7"/></svg>
<svg style="left:3px;top:113.7px" width="5" height="4" viewBox="0 0 5 4"><path d="M0.6 0.9 L2.5 3 L4.4 0.9" fill="none" stroke="#666" stroke-width="0.7"/></svg>
<svg style="left:3px;top:250.2px" width="5" height="4" viewBox="0 0 5 4"><path d="M0.6 0.9 L2.5 3 L4.4 0.9" fill="none" stroke="#666" stroke-width="0.7"/></svg>
<svg style="left:3px;top:386.7px" width="5" height="4" viewBox="0 0 5 4"><path d="M0.6 0.9 L2.5 3 L4.4 0.9" fill="none" stroke="#666" stroke-width="0.7"/></svg>
<svg style="left:289.2px;top:3.4px" width="8.6" height="8.6" viewBox="0 0 8.6 8.6"><rect x="0.4" y="0.4" width="8" height="8" rx="1.2" fill="#3d9be9"/><rect x="0.4" y="0.4" width="8" height="8" rx="1.2" fill="none" stroke="#2584dc" stroke-width="0.5"/><rect x="3" y="1.5" width="2.8" height="2" fill="#fff" opacity="0.95"/><path d="M2.2 3.6 H6.6 L7.2 7 H1.6 Z" fill="#e9f4fd" opacity="0.9"/><rect x="3" y="5" width="2.8" height="1.6" fill="#3d9be9" opacity="0.6"/></svg>
<svg style="left:291px;top:22px" width="2" height="8" viewBox="0 0 2 8"><rect x="0.4" y="0.3" width="0.8" height="7.2" fill="#8a8a8a"/></svg>
<svg style="left:296.5px;top:19.5px" width="16" height="12" viewBox="0 0 16 12"><path d="M0.6 1.2 Q0.6 0.6 1.2 0.6 H4.8 L5.8 2 H11.6 Q12.2 2 12.2 2.6 V4.6 H3.4 L0.6 10.6 Z" fill="#f3cf62"/><path d="M3.6 5.2 H15.4 L12.4 11.3 H0.8 Z" fill="#f4c22b"/></svg>
<svg style="left:317px;top:19.5px" width="13" height="13" viewBox="0 0 13 13"><path d="M0.7 0.7 H10.4 L12.4 2.5 V12.2 H0.7 Z" fill="#4d4d4d"/><rect x="3" y="0.7" width="6.2" height="3.6" fill="#f4f4f4"/><rect x="6.4" y="1.2" width="1.7" height="2.4" fill="#4d4d4d"/><rect x="2.4" y="6.4" width="8.2" height="4.6" fill="#f4f4f4"/><rect x="2.4" y="7.9" width="8.2" height="0.9" fill="#4d4d4d"/></svg>
<svg style="left:335.2px;top:18.5px" width="1" height="15" viewBox="0 0 1 15"><rect x="0" y="0" width="0.8" height="15" fill="#dedede"/></svg>
<svg style="left:340.5px;top:19.5px" width="16" height="13" viewBox="0 0 16 13"><path d="M4.3 0.6 H6.6 L7.2 6 H8.2 L8.8 0.6 H11.1 L14.6 8.2 V10 H0.8 V8.2 Z" fill="#4d4d4d"/><circle cx="3.6" cy="9.4" r="3" fill="#4d4d4d"/><circle cx="11.8" cy="9.4" r="3" fill="#4d4d4d"/><circle cx="3.6" cy="9.4" r="1.6" fill="#f4f4f4"/><circle cx="11.8" cy="9.4" r="1.6" fill="#f4f4f4"/><rect x="7.2" y="0" width="1" height="6.2" fill="#f4f4f4"/></svg>
<svg style="left:360.3px;top:18.5px" width="1" height="15" viewBox="0 0 1 15"><rect x="0" y="0" width="0.8" height="15" fill="#dedede"/></svg>
<svg style="left:365.2px;top:19px" width="15" height="14" viewBox="0 0 15 14"><rect x="3.9" y="0.6" width="7.2" height="5" fill="#fbfbfb" stroke="#4d4d4d" stroke-width="0.9"/><rect x="0.4" y="4.3" width="14.2" height="7.3" rx="1.5" fill="#4d4d4d"/><rect x="3.9" y="8.4" width="7.2" height="5" fill="#fbfbfb" stroke="#4d4d4d" stroke-width="0.9"/></svg>
<svg style="left:383.7px;top:19px" width="17" height="15" viewBox="0 0 17 15"><rect x="3.9" y="0.6" width="7.2" height="5" fill="#fbfbfb" stroke="#4d4d4d" stroke-width="0.9"/><rect x="0.4" y="4.3" width="14.2" height="7.3" rx="1.5" fill="#4d4d4d"/><rect x="3.9" y="8.4" width="7.2" height="5" fill="#fbfbfb" stroke="#4d4d4d" stroke-width="0.9"/><path d="M9.6 10.2 L13.8 6.6 L13.2 9.2 L16.6 8.6 L11.4 14.4 L12.2 10.9 Z" fill="#f6bf26" stroke="#f0f0f0" stroke-width="0.5"/></svg>
<svg style="left:405px;top:18px" width="13" height="16" viewBox="0 0 13 16"><rect x="1.5" y="1.5" width="10" height="13" rx="0.5" fill="#fff" stroke="#555" stroke-width="1"/><rect x="3.9" y="2" width="5.6" height="12" fill="#f4f9fe"/><path d="M3.8 2 V14 M9.4 2 V14 M2 4.1 H11 M2 11.9 H11" stroke="#1f7fe0" stroke-width="1.3"/></svg>
<svg style="left:423px;top:18px" width="16" height="16" viewBox="0 0 16 16"><rect x="1.5" y="1.5" width="13" height="13" rx="0.5" fill="#fff" stroke="#555" stroke-width="1"/><path d="M5 5 L11 11" stroke="#1272d6" stroke-width="1.2"/><path d="M3.4 3.4 H7.2 L3.4 7.2 Z M12.6 12.6 H8.8 L12.6 8.8 Z" fill="#1272d6"/></svg>
<svg style="left:443.2px;top:18.5px" width="1" height="15" viewBox="0 0 1 15"><rect x="0" y="0" width="0.8" height="15" fill="#dedede"/></svg>
<svg style="left:449px;top:20.5px" width="12" height="11" viewBox="0 0 12 11"><rect x="0.3" y="0.3" width="2" height="10" fill="#a9cff1"/><path d="M2.8 5.3 L11.6 0.3 V10.3 Z" fill="#a9cff1"/></svg>
<svg style="left:469.5px;top:20.5px" width="9" height="11" viewBox="0 0 9 11"><path d="M0.4 5.3 L8.6 0.5 V10.1 Z" fill="#a9cff1"/></svg>
<svg style="left:491px;top:20.5px" width="9" height="11" viewBox="0 0 9 11"><path d="M8.7 5.3 L0.5 0.5 V10.1 Z" fill="#0f6fd1"/></svg>
<svg style="left:507.5px;top:20.5px" width="12" height="11" viewBox="0 0 12 11"><path d="M8.8 5.3 L0.4 0.3 V10.3 Z" fill="#0f6fd1"/><rect x="9.3" y="0.3" width="2.1" height="10" fill="#0f6fd1"/></svg>
<svg style="left:526px;top:18px" width="16" height="16" viewBox="0 0 16 16"><circle cx="7.7" cy="7.7" r="6.6" fill="#fff" stroke="#2886e2" stroke-width="1.3"/><path d="M11.6 3.6 L9.2 9.2 L6.2 6.2 Z" fill="#ea4f2c"/><path d="M3.8 11.8 L6.2 6.2 L9.2 9.2 Z" fill="#1f6fd0"/></svg>
<svg style="left:545.2px;top:18.5px" width="1" height="15" viewBox="0 0 1 15"><rect x="0" y="0" width="0.8" height="15" fill="#dedede"/></svg>
<svg style="left:551px;top:20px" width="14" height="13" viewBox="0 0 14 13"><circle cx="4.6" cy="4.5" r="3.6" fill="none" stroke="#555" stroke-width="1"/><path d="M7.3 7.2 L12.6 11.8" stroke="#555" stroke-width="1.4"/><path d="M2.6 4.5 H6.6" stroke="#555" stroke-width="0.9"/></svg>
<svg style="left:569.5px;top:18.5px" width="16" height="15" viewBox="0 0 16 15"><circle cx="6.2" cy="6" r="5.1" fill="none" stroke="#555" stroke-width="1.05"/><path d="M10 9.8 L14.6 14" stroke="#555" stroke-width="1.5"/></svg>
<svg style="left:589px;top:24.5px" width="5" height="4" viewBox="0 0 5 4"><path d="M0.6 0.9 L2.3 2.7 L4 0.9" fill="none" stroke="#777" stroke-width="0.7"/></svg>
<svg style="left:598px;top:20px" width="14" height="13" viewBox="0 0 14 13"><circle cx="4.6" cy="4.5" r="3.6" fill="none" stroke="#555" stroke-width="1"/><path d="M7.3 7.2 L12.6 11.8" stroke="#555" stroke-width="1.4"/><path d="M2.6 4.5 H6.6 M4.6 2.5 V6.5" stroke="#555" stroke-width="0.9"/></svg>
<svg style="left:616.3px;top:18.5px" width="1" height="15" viewBox="0 0 1 15"><rect x="0" y="0" width="0.8" height="15" fill="#dedede"/></svg>
<svg style="left:623px;top:19px" width="12" height="15" viewBox="0 0 12 15"><path d="M1.7 1.5 H7.4 L10.5 4.6 V13.4 H1.7 Z" fill="#fcfcfc" stroke="#555" stroke-width="0.95" stroke-linejoin="round"/><path d="M7.2 1.6 V4.8 H10.4" fill="none" stroke="#555" stroke-width="0.8"/><path d="M3.4 5.6 H6 M3.4 7.3 H8.8 M3.4 9 H8.8 M3.4 10.7 H8.8" stroke="#555" stroke-width="0.75"/></svg>
<svg style="left:640.5px;top:24.8px" width="5" height="4" viewBox="0 0 5 4"><path d="M0.6 0.9 L2.3 2.7 L4 0.9" fill="none" stroke="#777" stroke-width="0.7"/></svg>
<svg style="left:650px;top:19px" width="12" height="15" viewBox="0 0 12 15"><path d="M2.4 1.5 H9.6 M1.5 2.2 V5.3 H10.5 V2.2" fill="none" stroke="#555" stroke-width="1"/><path d="M1.5 12.9 V8 H7.6 L10.5 10.6 V12.9" fill="none" stroke="#555" stroke-width="1"/><path d="M7.4 8.2 V10.8 H10.3" fill="none" stroke="#555" stroke-width="0.8"/><path d="M2.6 13.4 H9.4" stroke="#555" stroke-width="1"/></svg>
<svg style="left:668px;top:18px" width="14" height="15" viewBox="0 0 14 15"><path d="M7.6 0.6 H11.2 L13.2 2.6 V6.0 H7.6 Z" fill="#f4f4f4" stroke="#c9c9c9" stroke-width="0.8" stroke-linejoin="round"/><path d="M11.0 0.8 V2.8000000000000003 H13.0" fill="none" stroke="#c9c9c9" stroke-width="0.6"/><path d="M0.6 9 H4.2 L6.199999999999999 11 V14.4 H0.6 Z" fill="#f4f4f4" stroke="#c9c9c9" stroke-width="0.8" stroke-linejoin="round"/><path d="M4.0 9.2 V11.2 H6.0" fill="none" stroke="#c9c9c9" stroke-width="0.6"/><path d="M7.6 9 H11.2 L13.2 11 V14.4 H7.6 Z" fill="#f4f4f4" stroke="#c9c9c9" stroke-width="0.8" stroke-linejoin="round"/><path d="M11.0 9.2 V11.2 H13.0" fill="none" stroke="#c9c9c9" stroke-width="0.6"/></svg>
<svg style="left:687.3px;top:18.5px" width="1" height="15" viewBox="0 0 1 15"><rect x="0" y="0" width="0.8" height="15" fill="#dedede"/></svg>
<svg style="left:693.5px;top:19.5px" width="14" height="13" viewBox="0 0 14 13"><path d="M4 0.9 H9.2 L12 3.8 V11.6 H4 Z" fill="#fafafa" stroke="#555" stroke-width="0.95"/><path d="M9 1 V4 H11.9" fill="none" stroke="#555" stroke-width="0.8"/><path d="M0.4 7.2 H5.6" stroke="#1e8a2e" stroke-width="1.1"/><path d="M4.4 4.9 L7.2 7.2 L4.4 9.5 Z" fill="#1e8a2e"/></svg>
<svg style="left:711px;top:24.8px" width="5" height="4" viewBox="0 0 5 4"><path d="M0.6 0.9 L2.3 2.7 L4 0.9" fill="none" stroke="#777" stroke-width="0.7"/></svg>
<svg style="left:720.5px;top:21.3px" width="14" height="10" viewBox="0 0 14 10"><rect x="0.8" y="0.7" width="11.8" height="8.6" rx="0.5" fill="#fafafa" stroke="#555" stroke-width="0.95"/><path d="M1 1 L6.7 5.6 L12.4 1 M1 9 L5 4.6 M12.4 9 L8.4 4.6" fill="none" stroke="#555" stroke-width="0.8"/></svg>
<svg style="left:738.3px;top:24.8px" width="5" height="4" viewBox="0 0 5 4"><path d="M0.6 0.9 L2.3 2.7 L4 0.9" fill="none" stroke="#777" stroke-width="0.7"/></svg>
<svg style="left:698px;top:4px" width="8" height="8" viewBox="0 0 8 8"><path d="M1 4.2 H6.8" stroke="#666" stroke-width="0.8"/></svg>
<svg style="left:721px;top:4px" width="8" height="8" viewBox="0 0 8 8"><rect x="1.2" y="1.3" width="5.4" height="5.2" rx="0.9" fill="none" stroke="#666" stroke-width="0.85"/></svg>
<svg style="left:744px;top:4px" width="8" height="8" viewBox="0 0 8 8"><path d="M1.2 1.2 L6.8 6.8 M6.8 1.2 L1.2 6.8" stroke="#666" stroke-width="0.8"/></svg>
<svg style="left:0;top:0" width="750" height="476" viewBox="0 0 750 476"><path d="M266.0 82.7 L268.9 83.9 L271.7 85.3 L274.4 86.7 L277.1 88.3 L279.6 90.0 L282.1 91.7 L284.5 93.5 L286.9 95.4 L289.2 97.4 L291.4 99.4 L293.7 101.5 L295.9 103.6 L298.0 105.7 L300.2 107.9 L302.3 110.1 L304.4 112.4 L306.5 114.6 L308.5 116.9 L310.5 119.3 L312.5 121.6 L314.5 124.0 L316.4 126.4 L318.3 128.8 L320.2 131.2 L322.0 133.6 L323.8 136.1 L325.6 138.6 L327.3 141.1 L329.0 143.6 L330.7 146.2 L332.2 148.8 L333.8 151.4 L335.2 154.0 L336.6 156.7 L337.9 159.5 L341.9 157.6 L340.5 154.8 L339.0 152.0 L337.5 149.3 L335.9 146.6 L334.2 143.9 L332.5 141.3 L330.8 138.8 L329.0 136.2 L327.1 133.7 L325.3 131.2 L323.3 128.8 L321.4 126.3 L319.4 123.9 L317.5 121.5 L315.4 119.1 L313.4 116.8 L311.3 114.4 L309.2 112.1 L307.1 109.9 L304.9 107.6 L302.7 105.4 L300.4 103.3 L298.2 101.2 L295.8 99.1 L293.4 97.1 L291.0 95.2 L288.5 93.4 L285.9 91.6 L283.3 90.0 L280.6 88.4 L277.9 86.9 L275.0 85.5 L272.2 84.3 L269.2 83.2 L266.1 82.2 Z M307.5 137.8 L311.0 139.1 L314.2 140.7 L317.3 142.6 L320.2 144.7 L323.1 147.1 L325.8 149.5 L328.5 152.1 L331.2 154.7 L333.9 157.4 L336.6 160.0 L339.3 162.6 L342.5 159.0 L339.7 156.7 L336.9 154.2 L334.1 151.7 L331.2 149.2 L328.3 146.7 L325.3 144.3 L322.1 142.1 L318.9 140.1 L315.4 138.3 L311.8 136.9 L308.1 135.8 Z M334.7 124.1 L334.8 127.5 L335.0 130.9 L335.2 134.3 L335.4 137.6 L335.7 141.0 L336.1 144.4 L336.5 147.8 L336.9 151.2 L337.4 154.6 L337.9 158.0 L338.6 161.3 L343.2 160.3 L342.4 157.0 L341.7 153.8 L341.0 150.5 L340.3 147.2 L339.7 143.9 L339.2 140.6 L338.7 137.3 L338.2 133.9 L337.7 130.6 L337.2 127.3 L336.7 123.9 Z" fill="#f7780f"/><path d="M338.2 158.6 L341.9 157.2 L341.5 161.6 Z" fill="#f7780f"/></svg>
</div>
</body></html>
